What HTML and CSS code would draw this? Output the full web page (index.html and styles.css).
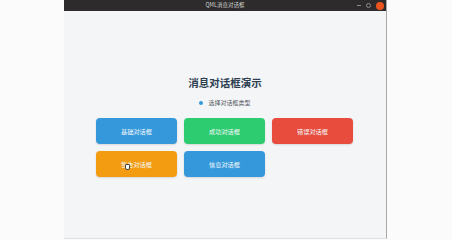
FILE: index.html
```html
<!DOCTYPE html>
<html lang="zh-CN">
<head>
    <meta charset="UTF-8">
    <meta name="viewport" content="width=device-width, initial-scale=1.0">
    <title>QML消息对话框</title>
    <link rel="stylesheet" href="styles.css">
</head>
<body>

<div class="window">
    <div class="titlebar">
        <span class="title">QML消息对话框</span>
        <div class="controls">
            <span class="ctl-min"></span>
            <span class="ctl-max"></span>
            <span class="ctl-close"></span>
        </div>
    </div>
    <div class="content">
        <h2>消息对话框演示</h2>
        <div class="hint"><span class="dot"></span>选择对话框类型</div>
        <div class="buttons">
            <button class="btn blue">基础对话框</button>
            <button class="btn green">成功对话框</button>
            <button class="btn red">错误对话框</button>
            <button class="btn orange">警告对话框<span class="cursor"></span></button>
            <button class="btn blue">信息对话框</button>
        </div>
    </div>
</div>

</body>
</html>
```

FILE: styles.css
```css
body {
    margin: 0;
    background: #fbfbfb;
    font-family: "Noto Sans CJK SC", "Noto Sans", sans-serif;
}
.window {
    margin-left: 64px;
    width: 322px;
    height: 238px;
    background: #f4f5f7;
    border-right: 1px solid #a9a9a9;
    border-bottom: 1px solid #dfe1e3;
    display: flex;
    flex-direction: column;
}
.titlebar {
    height: 11px;
    background: #2d2b2b;
    position: relative;
    display: flex;
    align-items: center;
    justify-content: center;
}
.titlebar .title {
    color: #d6d6d6;
    font-size: 5.5px;
    line-height: 11px;
}
.controls {
    position: absolute;
    right: 2px;
    top: 0;
    height: 11px;
    display: flex;
    align-items: center;
    gap: 5px;
}
.ctl-min {
    width: 4px;
    height: 1px;
    background: #8d8b8b;
}
.ctl-max {
    width: 3px;
    height: 3px;
    border: 1px solid #8d8b8b;
    border-radius: 50%;
}
.ctl-close {
    width: 8px;
    height: 8px;
    background: #e9541f;
    border-radius: 50%;
}
.content {
    flex: 1;
    display: flex;
    flex-direction: column;
    align-items: center;
    padding-top: 64px;
}
.content h2 {
    margin: 0;
    font-size: 10.5px;
    line-height: 15px;
    color: #2c3e50;
    font-weight: bold;
}
.hint {
    margin-top: 8px;
    display: flex;
    align-items: center;
    gap: 5px;
    font-size: 6px;
    line-height: 10px;
    color: #555b62;
}
.hint .dot {
    width: 4px;
    height: 4px;
    border-radius: 50%;
    background: #3498db;
}
.buttons {
    margin-top: 10px;
    margin-right: 1px;
    display: grid;
    grid-template-columns: repeat(3, 81px);
    grid-auto-rows: 26px;
    gap: 7px;
}
.btn {
    border: none;
    border-radius: 4px;
    color: #f4f8fb;
    font-family: inherit;
    font-size: 6.2px;
    padding: 0;
    position: relative;
    box-shadow: 0 1px 2px rgba(0, 0, 0, 0.12);
}
.blue { background: #3498db; }
.green { background: #2ecc71; }
.red { background: #e74c3c; }
.orange { background: #f39c12; }
.cursor {
    position: absolute;
    left: 29px;
    top: 13px;
    width: 3px;
    height: 4px;
    background: #fff;
    border: 1px solid #444;
    border-radius: 1px 1px 2px 2px;
}
```
